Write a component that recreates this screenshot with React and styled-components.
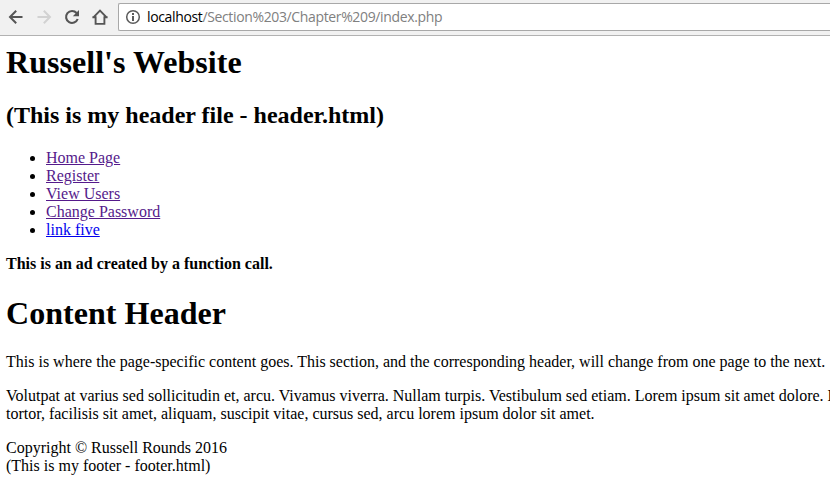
import React from 'react';
import styled, { createGlobalStyle } from 'styled-components';

const GlobalStyle = createGlobalStyle`
  html, body { margin: 0; padding: 0; background: #fff; overflow: hidden; }
`;

const Window = styled.div`
  width: 830px;
  height: 477px;
  overflow: hidden;
  display: flex;
  flex-direction: column;
  background: #fff;
`;

const Toolbar = styled.header`
  box-sizing: border-box;
  flex: none;
  height: 36px;
  display: flex;
  align-items: flex-start;
  padding: 3px 0 0 2px;
  background: #f1f1f1;
  border-bottom: 1px solid #b2b2b2;
`;

const NavButton = styled.button`
  width: 28px;
  height: 28px;
  flex: none;
  padding: 0;
  border: 0;
  background: none;
  display: flex;
  align-items: center;
  justify-content: center;
  color: ${(p) => (p.disabled ? '#d2d2d2' : '#555')};
`;

const Icon = styled.svg`
  display: block;
  flex: none;
  fill: currentColor;
`;

const AddressBar = styled.div`
  box-sizing: border-box;
  flex: 1;
  height: 28px;
  margin-left: 4px;
  padding-left: 6px;
  display: flex;
  align-items: center;
  gap: 6px;
  background: #fff;
  border: 1px solid #a8a8a8;
  border-right: 0;
  border-radius: 2px 0 0 2px;
  color: #5a5a5a;
`;

const Url = styled.span`
  font: 14px/20px 'Open Sans', 'Noto Sans', sans-serif;
  letter-spacing: -0.36px;
  white-space: nowrap;
  color: #808080;
`;

const Host = styled.span`
  color: #000;
`;

const Page = styled.main`
  width: 900px;
  padding: 8px 0 0 6px;
  font: 16px/18px 'Liberation Serif', 'Times New Roman', serif;
  color: #000;
`;

const Title = styled.h1`
  margin: 0;
  font-size: 32px;
  line-height: 37px;
  letter-spacing: 0.04px;
`;

const Subtitle = styled.h2`
  margin: 21px 0 0;
  font-size: 24px;
  line-height: 27px;
`;

const LinkList = styled.ul`
  margin: 20px 0 0;
  padding: 0 0 0 40px;
`;

const PageLink = styled.a`
  color: ${(p) => (p.$visited ? '#551a8b' : '#0000ee')};
  text-decoration: underline;
`;

const Ad = styled.p`
  margin: 16px 0 0;
  font-weight: bold;
`;

const ContentTitle = styled(Title)`
  margin-top: 22px;
`;

const Paragraph = styled.p`
  margin: ${(p) => p.$gap || 16}px 0 0;
  white-space: nowrap;
`;

const links = [
  ['Home Page', true],
  ['Register', true],
  ['View Users', true],
  ['Change Password', true],
  ['link five', false],
];

export default function App() {
  return (
    <Window>
      <GlobalStyle />
      <Toolbar>
        <NavButton aria-label="Back">
          <Icon width="16" height="16" viewBox="0 0 16 16">
            <path d="M14.5 8H2.4M8.2 1.8 2 8l6.2 6.2" fill="none" stroke="currentColor" strokeWidth="2" />
          </Icon>
        </NavButton>
        <NavButton aria-label="Forward" disabled>
          <Icon width="16" height="16" viewBox="0 0 16 16">
            <path d="M1.5 8h12.1M7.8 1.8 14 8l-6.2 6.2" fill="none" stroke="currentColor" strokeWidth="2" />
          </Icon>
        </NavButton>
        <NavButton aria-label="Reload">
          <Icon width="16" height="16" viewBox="0 0 16 16">
            <path d="M12.6 4A6 6 0 1 0 13.7 10" fill="none" stroke="currentColor" strokeWidth="2.1" />
            <path d="M15 1v6.2H8.8z" />
          </Icon>
        </NavButton>
        <NavButton aria-label="Home">
          <Icon width="16" height="16" viewBox="0 0 16 16">
            <path d="M1.4 8.3 8 1.6l6.6 6.7M0.4 8.2h3.2v6.7h8.8V8.2h3.2" fill="none" stroke="currentColor" strokeWidth="1.9" />
          </Icon>
        </NavButton>
        <AddressBar>
          <Icon width="16" height="16" viewBox="0 0 16 16">
            <circle cx="8" cy="8" r="6.3" fill="none" stroke="currentColor" strokeWidth="1.5" />
            <path d="M7 4h2v2H7zM7 7h2v5H7z" />
          </Icon>
          <Url><Host>localhost</Host>/Section%203/Chapter%209/index.php</Url>
        </AddressBar>
      </Toolbar>
      <Page>
        <Title>Russell's Website</Title>
        <Subtitle>(This is my header file - header.html)</Subtitle>
        <LinkList>
          {links.map(([label, visited]) => (
            <li key={label}><PageLink href="#" $visited={visited}>{label}</PageLink></li>
          ))}
        </LinkList>
        <Ad>This is an ad created by a function call.</Ad>
        <ContentTitle>Content Header</ContentTitle>
        <Paragraph $gap={21}>
          This is where the page-specific content goes. This section, and the corresponding header, will change from one page to the next.
        </Paragraph>
        <Paragraph>
          Volutpat at varius sed sollicitudin et, arcu. Vivamus viverra. Nullam turpis. Vestibulum sed etiam. Lorem ipsum sit amet dolore. L<br />
          tortor, facilisis sit amet, aliquam, suscipit vitae, cursus sed, arcu lorem ipsum dolor sit amet.
        </Paragraph>
        <Paragraph>
          Copyright © Russell Rounds 2016<br />
          (This is my footer - footer.html)
        </Paragraph>
      </Page>
    </Window>
  );
}
